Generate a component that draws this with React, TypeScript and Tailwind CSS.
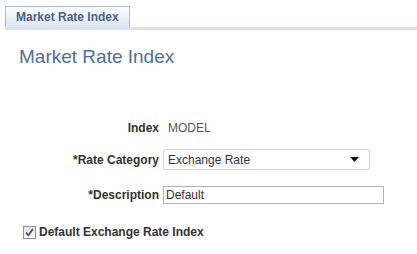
export default function App() {
  const font = { fontFamily: '"Liberation Sans", Arial, sans-serif' };
  return (
    <div className="w-[417px] h-[254px] bg-white overflow-hidden" style={font}>
      {/* tab strip */}
      <div className="pt-[6px] pl-[5px]">
        <div className="flex border-b-[3px] border-[#d9e3f0]">
          <div className="h-[21px] w-[125px] border border-b-0 border-[#a9bad0] bg-gradient-to-b from-[#ffffff] to-[#dce6f3] pl-[10px] flex items-center text-[12px] font-bold text-[#4a6286]">
            Market Rate Index
          </div>
        </div>
      </div>

      <h1 className="mt-[16px] ml-[19px] text-[19px] leading-[22px] text-[#4c6f9e]">
        Market Rate Index
      </h1>

      <div className="mt-[53px] grid grid-cols-[159px_1fr] gap-x-[4px] items-center text-[12px]">
        <div className="text-right font-bold text-[#333333] leading-[14px]">Index</div>
        <div className="pl-[5px] text-[#555555] leading-[14px]">MODEL</div>

        <div className="mt-[14px] text-right font-bold text-[#333333]">*Rate Category</div>
        <div className="mt-[14px]">
          <div className="w-[207px] h-[21px] border border-[#d3d3d3] rounded-[2px] flex items-center justify-between pl-[4px] pr-[10px] text-[#333333]">
            <span>Exchange Rate</span>
            <svg width="9" height="5" viewBox="0 0 9 5">
              <path d="M0 0h9L4.5 5z" fill="#111111" />
            </svg>
          </div>
        </div>

        <div className="mt-[16px] text-right font-bold text-[#333333]">*Description</div>
        <div className="mt-[16px]">
          <div className="w-[221px] h-[18px] border border-[#b5b5b5] flex items-center pl-[2px] text-[#333333]">
            Default
          </div>
        </div>
      </div>

      <div className="mt-[19px] ml-[23px] flex items-center gap-[3px]">
        <div className="w-[13px] h-[13px] border border-[#8e8f8f] bg-gradient-to-b from-[#e6e6e6] to-[#fbfbfb] flex items-center justify-center">
          <svg width="9" height="9" viewBox="0 0 9 9">
            <path d="M1 4.5l2.3 2.8L8 1" fill="none" stroke="#3053a5" strokeWidth="1.8" />
          </svg>
        </div>
        <span className="text-[12px] font-bold text-[#333333]">Default Exchange Rate Index</span>
      </div>
    </div>
  );
}
